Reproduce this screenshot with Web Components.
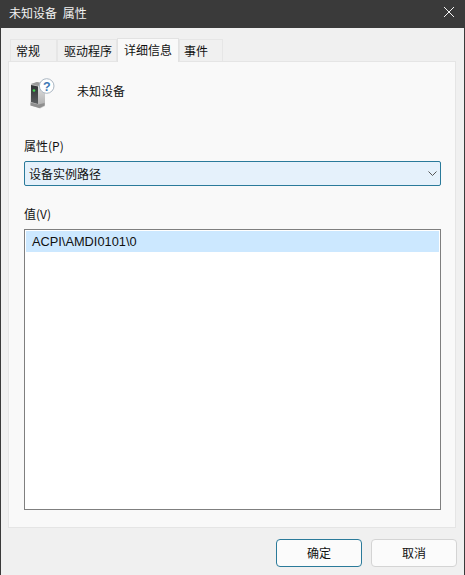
<!DOCTYPE html>
<html lang="zh">
<head>
<meta charset="utf-8">
<title>未知设备 属性</title>
<style>
  html, body { margin: 0; padding: 0; background: #3a3a3a; }
  body { font: 12px "Noto Sans CJK SC", "Liberation Sans", sans-serif; color: #111; }
</style>
</head>
<body>
<device-dialog caption="未知设备 属性">
  <tab-bar slot="tabs">
    <tab-item style="--w:47px;--p:5px">常规</tab-item>
    <tab-item style="--w:60px;--p:6px">驱动程序</tab-item>
    <tab-item style="--w:62px;--p:6px" selected>详细信息</tab-item>
    <tab-item style="--w:44px;--p:4px">事件</tab-item>
  </tab-bar>
  <details-panel>
    <device-head>未知设备</device-head>
    <field-label style="--top:27px">属性(P)</field-label>
    <combo-box>设备实例路径</combo-box>
    <field-label style="--top:19px">值(V)</field-label>
    <value-list><value-row>ACPI\AMDI0101\0</value-row></value-list>
  </details-panel>
  <dialog-button slot="buttons" primary>确定</dialog-button>
  <dialog-button slot="buttons">取消</dialog-button>
</device-dialog>

<script>
class DeviceDialog extends HTMLElement {
  constructor() {
    super();
    this.attachShadow({mode: 'open'}).innerHTML = `
      <style>
        :host { display: flex; flex-direction: column; width: 463px; height: 575px; margin-left: 1px; background: #f0f0f0; }
        .title { display: flex; align-items: center; justify-content: space-between; box-sizing: border-box; height: 28px; padding: 0 10px 3px 8px;
          background: #3a3a3a; color: #f2f2f2; font-size: 12px; word-spacing: 3px; }
        .title svg { display: block; margin-top: -1px; }
        .body { display: flex; flex-direction: column; flex: 1; padding: 10px 8px 8px 7px; min-height: 0; }
        .foot { display: flex; justify-content: flex-end; gap: 9px; padding-top: 11px; margin-right: -1px; }
      </style>
      <div class="title">
        <span id="cap"></span>
        <svg width="10" height="10" viewBox="0 0 10 10"><path d="M0 0l10 10M10 0L0 10" stroke="#f4f4f4" stroke-width="1" fill="none"/></svg>
      </div>
      <div class="body">
        <slot name="tabs"></slot>
        <slot></slot>
        <div class="foot"><slot name="buttons"></slot></div>
      </div>`;
    this.shadowRoot.getElementById('cap').textContent = this.getAttribute('caption');
  }
}

class TabBar extends HTMLElement {
  constructor() {
    super();
    this.attachShadow({mode: 'open'}).innerHTML = `
      <style>
        :host { display: flex; align-items: flex-end; height: 23px; padding-left: 2px; position: relative; z-index: 1; }
      </style>
      <slot></slot>`;
  }
}

class TabItem extends HTMLElement {
  constructor() {
    super();
    this.attachShadow({mode: 'open'}).innerHTML = `
      <style>
        :host { display: flex; align-items: center; box-sizing: border-box; width: var(--w); height: 22px; padding-left: var(--p);
          background: #f0f0f0; border: 1px solid #e6e6e6; border-bottom: 0; color: #111; }
        :host([selected]) { height: 24px; margin-bottom: -1px; background: #f9f9f9; border-color: #e2e2e2; padding-bottom: 3px; }
      </style>
      <slot></slot>`;
  }
}

class DetailsPanel extends HTMLElement {
  constructor() {
    super();
    this.attachShadow({mode: 'open'}).innerHTML = `
      <style>
        :host { display: flex; flex-direction: column; flex: 1; min-height: 0; box-sizing: border-box;
          padding: 0 14px 17px 15px; background: #f9f9f9; border: 1px solid #e5e5e5; }
      </style>
      <slot></slot>`;
  }
}

class DeviceHead extends HTMLElement {
  constructor() {
    super();
    this.attachShadow({mode: 'open'}).innerHTML = `
      <style>
        :host { display: flex; align-items: center; gap: 18px; padding: 16px 0 0 3px; height: 32px; }
        svg { display: block; flex: none; }
        span { position: relative; top: -4px; }
      </style>
      <svg width="32" height="32" viewBox="0 0 32 32">
        <defs>
          <linearGradient id="side" x1="0" y1="0" x2="0" y2="1"><stop offset="0" stop-color="#e4e4e4"/><stop offset="1" stop-color="#a9a9a9"/></linearGradient>
          <linearGradient id="front" x1="0" y1="0" x2="0" y2="1"><stop offset="0" stop-color="#2f3234"/><stop offset="1" stop-color="#5a5d5f"/></linearGradient>
        </defs>
        <path d="M4 6l6-2 8 2v22l-5 2.500L3.500 27.500z" fill="#c4c4c4"/>
        <path d="M4 6l6-2 8 2-7 2z" fill="#9a9a9a"/>
        <path d="M11 8l7-2v21l-7 3z" fill="url(#side)"/>
        <path d="M4 7l7 1.500V26L4 24z" fill="url(#front)"/>
        <path d="M3.500 24.500l8 2 6-1.500v2.500l-5 2.500-9-2.500z" fill="#8f8f8f"/>
        <circle cx="7" cy="12.500" r="1.300" fill="#3fd24f"/>
        <circle cx="19.700" cy="8" r="7.300" fill="#fff" stroke="#aab6c2"/>
        <text x="19.700" y="12.500" text-anchor="middle" font-family="Liberation Sans, sans-serif" font-weight="700" font-size="12.500" fill="#3f79b5">?</text>
      </svg>
      <span><slot></slot></span>`;
  }
}

class FieldLabel extends HTMLElement {
  constructor() {
    super();
    this.attachShadow({mode: 'open'}).innerHTML = `
      <style>
        :host { display: block; margin-top: var(--top); line-height: 17px; height: 17px; margin-bottom: 7px; color: #111; }
      </style>
      <slot></slot>`;
  }
}

class ComboBox extends HTMLElement {
  constructor() {
    super();
    this.attachShadow({mode: 'open'}).innerHTML = `
      <style>
        :host { display: flex; align-items: center; justify-content: space-between; box-sizing: border-box; height: 25px; padding: 0 3px 0 4px;
          background: #e5f1fb; border: 1px solid #2a7a9a; border-radius: 2px; }
        svg { display: block; }
      </style>
      <slot></slot>
      <svg width="9" height="5" viewBox="0 0 9 5"><path d="M.5.500L4.500 4.500 8.500.500" stroke="#555" fill="none"/></svg>`;
  }
}

class ValueList extends HTMLElement {
  constructor() {
    super();
    this.attachShadow({mode: 'open'}).innerHTML = `
      <style>
        :host { display: block; flex: 1; box-sizing: border-box; padding: 1px; background: #fff; border: 1px solid #7f7f7f; min-height: 0; }
      </style>
      <slot></slot>`;
  }
}

class ValueRow extends HTMLElement {
  constructor() {
    super();
    this.attachShadow({mode: 'open'}).innerHTML = `
      <style>
        :host { display: block; height: 21px; line-height: 21px; padding-left: 6px; background: #cce8ff; color: #111;
          font-family: "Liberation Sans", sans-serif; font-size: 12.800px; }
      </style>
      <slot></slot>`;
  }
}

class DialogButton extends HTMLElement {
  constructor() {
    super();
    this.attachShadow({mode: 'open'}).innerHTML = `
      <style>
        :host { display: flex; align-items: center; justify-content: center; box-sizing: border-box; width: 86px; height: 28px; padding-bottom: 2px;
          background: #fbfbfb; border: 1px solid #d4d4d4; border-radius: 4px; color: #111; }
        :host([primary]) { border-color: #2a7a9a; }
      </style>
      <slot></slot>`;
  }
}

customElements.define('device-dialog', DeviceDialog);
customElements.define('tab-bar', TabBar);
customElements.define('tab-item', TabItem);
customElements.define('details-panel', DetailsPanel);
customElements.define('device-head', DeviceHead);
customElements.define('field-label', FieldLabel);
customElements.define('combo-box', ComboBox);
customElements.define('value-list', ValueList);
customElements.define('value-row', ValueRow);
customElements.define('dialog-button', DialogButton);
</script>
</body>
</html>
